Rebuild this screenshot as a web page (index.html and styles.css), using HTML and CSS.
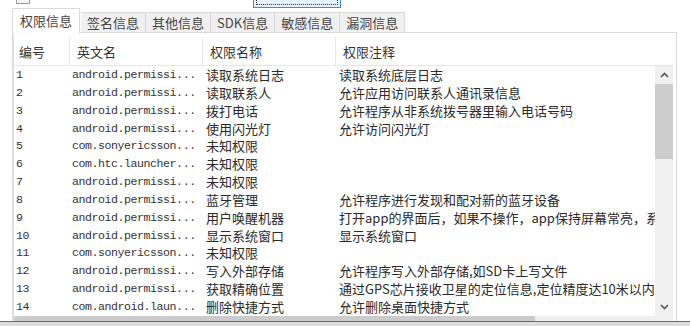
FILE: index.html
```html
<!DOCTYPE html>
<html lang="zh-CN">
<head>
  <meta charset="UTF-8">
  <title>权限信息</title>
  <link rel="stylesheet" href="styles.css">
</head>
<body>
  <!-- 上方被截掉的控件 -->
  <div class="top">
    <span class="check"></span>
    <span class="btn"></span>
  </div>
  <!-- 选项卡 -->
  <div class="tabs">
    <div class="tab active">权限信息</div>
    <div class="tab">签名信息</div>
    <div class="tab">其他信息</div>
    <div class="tab">SDK信息</div>
    <div class="tab">敏感信息</div>
    <div class="tab">漏洞信息</div>
  </div>
  <div class="panel">
    <div class="list">
      <div class="head">
        <div class="hc">编号</div>
        <div class="hc">英文名</div>
        <div class="hc">权限名称</div>
        <div class="hc">权限注释</div>
      </div>
      <div class="body">
        <div class="rows">
          <div class="row"><span class="en">1</span><span class="en">android.permissi...</span><span>读取系统日志</span><span>读取系统底层日志</span></div>
          <div class="row"><span class="en">2</span><span class="en">android.permissi...</span><span>读取联系人</span><span>允许应用访问联系人通讯录信息</span></div>
          <div class="row"><span class="en">3</span><span class="en">android.permissi...</span><span>拨打电话</span><span>允许程序从非系统拨号器里输入电话号码</span></div>
          <div class="row"><span class="en">4</span><span class="en">android.permissi...</span><span>使用闪光灯</span><span>允许访问闪光灯</span></div>
          <div class="row"><span class="en">5</span><span class="en">com.sonyericsson...</span><span>未知权限</span><span></span></div>
          <div class="row"><span class="en">6</span><span class="en">com.htc.launcher...</span><span>未知权限</span><span></span></div>
          <div class="row"><span class="en">7</span><span class="en">android.permissi...</span><span>未知权限</span><span></span></div>
          <div class="row"><span class="en">8</span><span class="en">android.permissi...</span><span>蓝牙管理</span><span>允许程序进行发现和配对新的蓝牙设备</span></div>
          <div class="row"><span class="en">9</span><span class="en">android.permissi...</span><span>用户唤醒机器</span><span>打开app的界面后，如果不操作，app保持屏幕常亮，系统不会休眠</span></div>
          <div class="row"><span class="en">10</span><span class="en">android.permissi...</span><span>显示系统窗口</span><span>显示系统窗口</span></div>
          <div class="row"><span class="en">11</span><span class="en">com.sonyericsson...</span><span>未知权限</span><span></span></div>
          <div class="row"><span class="en">12</span><span class="en">android.permissi...</span><span>写入外部存储</span><span>允许程序写入外部存储,如SD卡上写文件</span></div>
          <div class="row"><span class="en">13</span><span class="en">android.permissi...</span><span>获取精确位置</span><span>通过GPS芯片接收卫星的定位信息,定位精度达10米以内</span></div>
          <div class="row"><span class="en">14</span><span class="en">com.android.laun...</span><span>删除快捷方式</span><span>允许删除桌面快捷方式</span></div>
        </div>
        <div class="vscroll">
          <div class="arrow">
            <svg width="9" height="6" viewBox="0 0 9 6"><polyline points="1,5 4.5,1.5 8,5" fill="none" stroke="#555" stroke-width="1.6"/></svg>
          </div>
          <div class="thumb"></div>
          <div class="track"></div>
          <div class="arrow">
            <svg width="9" height="6" viewBox="0 0 9 6"><polyline points="1,1 4.5,4.5 8,1" fill="none" stroke="#555" stroke-width="1.6"/></svg>
          </div>
        </div>
      </div>
      <div class="hscroll"><div class="hthumb"></div></div>
    </div>
  </div>
  <div class="edge"></div>
</body>
</html>
```
FILE: styles.css
```css
/* 清除默认样式 */
* {
  margin: 0;
  padding: 0;
  box-sizing: border-box;
}
body {
  width: 690px;
  height: 326px;
  overflow: hidden;
  background: #fff;
  font: 13px "Noto Sans CJK SC", sans-serif;
  color: #333;
}
/* 顶部 */
.top {
  display: flex;
  height: 8px;
  padding-left: 16px;
}
.check {
  width: 14px;
  height: 14px;
  margin-top: -10px;
  border: 1px solid #9a9a9a;
  background: #f4f4f4;
}
.btn {
  width: 88px;
  height: 22px;
  margin-top: -14px;
  margin-left: 223px;
  border: 1px solid #3f8fd6;
  background: #e5f1fb;
  outline: 1px dotted #333;
  outline-offset: -4px;
}
/* 选项卡 */
.tabs {
  display: flex;
  align-items: flex-end;
  height: 24px;
  padding-left: 12px;
}
.tab {
  height: 20px;
  padding: 0 6px;
  line-height: 20px;
  background: #f0f0f0;
  border: 1px solid #dadada;
  border-left: none;
  border-bottom: none;
  color: #444;
  white-space: nowrap;
}
.tab.active {
  position: relative;
  z-index: 1;
  height: 25px;
  margin-bottom: -1px;
  padding: 0 7px;
  line-height: 23px;
  background: #fff;
  border-left: 1px solid #dadada;
  margin-right: 1px;
}
/* 面板 */
.panel {
  width: 665px;
  height: 289px;
  margin-left: 12px;
  padding: 1px 3px 0 0;
  border: 1px solid #dadada;
  border-bottom: none;
}
.list {
  border-left: 1px solid #e2e2e2;
}
.head {
  display: grid;
  grid-template-columns: 55px 133px 133px 1fr;
  height: 32px;
  padding-top: 3px;
  border-bottom: 1px solid #e6e6e6;
}
.hc {
  height: 28px;
  padding: 2px 0 0 7px;
  line-height: 26px;
  border-left: 1px solid #e6e6e6;
  color: #333;
}
.hc:first-child {
  padding-left: 5px;
  border-left: none;
}
.body {
  display: flex;
  height: 250px;
  overflow: hidden;
}
.rows {
  width: 641px;
}
.row {
  display: grid;
  grid-template-columns: 55px 133px 133px 320px;
  height: 17.85px;
  line-height: 17.85px;
  white-space: nowrap;
  color: #2a2a2a;
}
.row span {
  overflow: hidden;
  padding-left: 4px;
}
.row span:first-child {
  padding-left: 2px;
}
.row span:nth-child(2) {
  padding-left: 3px;
}
.row .en {
  font: 11.6px/17.85px "Liberation Mono", monospace;
  letter-spacing: -0.45px;
  color: #333;
}
/* 滚动条 */
.vscroll {
  display: flex;
  flex-direction: column;
  width: 18px;
  background: #f0f0f0;
}
.arrow {
  display: flex;
  align-items: center;
  justify-content: center;
  height: 18px;
}
.thumb {
  height: 75px;
  background: #cdcdcd;
}
.track {
  flex: 1;
}
.hscroll {
  height: 5px;
  background: #f0f0f0;
}
.hthumb {
  width: 521px;
  height: 5px;
  background: #cbcbcb;
}
.edge {
  height: 5px;
  border-top: 1px solid #6b6b6b;
  background: #dcdcdc;
}
```
